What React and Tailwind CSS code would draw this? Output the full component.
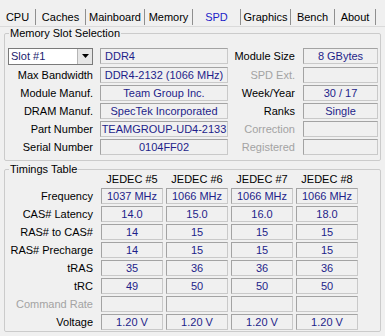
const tabs = [
  { name: "CPU", w: "w-[36px]" },
  { name: "Caches", w: "w-[50px]" },
  { name: "Mainboard", w: "w-[59px]" },
  { name: "Memory", w: "w-[48px]" },
  { name: "SPD", w: "w-[48px]", active: true },
  { name: "Graphics", w: "w-[50px]" },
  { name: "Bench", w: "w-[44px]" },
  { name: "About", w: "w-[41px]" },
];

const memRows = [
  { label: "Max Bandwidth", value: "DDR4-2132 (1066 MHz)", rLabel: "SPD Ext.", rValue: "", rOff: true },
  { label: "Module Manuf.", value: "Team Group Inc.", rLabel: "Week/Year", rValue: "30 / 17" },
  { label: "DRAM Manuf.", value: "SpecTek Incorporated", rLabel: "Ranks", rValue: "Single" },
  { label: "Part Number", value: "TEAMGROUP-UD4-2133", rLabel: "Correction", rValue: "", rOff: true },
  { label: "Serial Number", value: "0104FF02", rLabel: "Registered", rValue: "", rOff: true },
];

const timings = [
  { label: "Frequency", vals: ["1037 MHz", "1066 MHz", "1066 MHz", "1066 MHz"] },
  { label: "CAS# Latency", vals: ["14.0", "15.0", "16.0", "18.0"] },
  { label: "RAS# to CAS#", vals: ["14", "15", "15", "15"] },
  { label: "RAS# Precharge", vals: ["14", "15", "15", "15"] },
  { label: "tRAS", vals: ["35", "36", "36", "36"] },
  { label: "tRC", vals: ["49", "50", "50", "50"] },
  { label: "Command Rate", vals: ["", "", "", ""], off: true },
  { label: "Voltage", vals: ["1.20 V", "1.20 V", "1.20 V", "1.20 V"] },
];

const boxCls =
  "h-[16px] leading-[14px] border border-[#a3a3a3] border-r-[#c9c9c9] border-b-[#c9c9c9] text-[#1e1e8a] whitespace-nowrap overflow-hidden";

const Box = ({ value, className = "" }) => (
  <div className={`${boxCls} text-center ${className}`}>{value}</div>
);

const App = () => {
  return (
    <div className="w-[385px] h-[336px] bg-[#f0f0f0] text-[11px] leading-[13px] text-black overflow-hidden font-['Liberation_Sans',Arial,sans-serif]">
      <div className="flex h-[27px] pt-[9px] border-b border-[#dadada]">
        {tabs.map((t) => (
          <div
            key={t.name}
            className={`${t.w} h-[16px] leading-[16px] text-center border-r border-[#8f8f8f] ${
              t.active ? "text-[#1c1cc8]" : "text-black"
            }`}
          >
            {t.name}
          </div>
        ))}
      </div>

      <div className="px-[4px]">
        <fieldset className="w-[377px] border border-[#cbcbcb] rounded-[2px] pb-[5px]">
          <legend className="ml-[4px] px-[1px] leading-[13px]">Memory Slot Selection</legend>
          <div className="flex flex-col gap-[2px] pl-[3px] mt-[8px]">
            <div className="flex items-center h-[16px] mb-[1px]">
              <div className="w-[85px] h-[17px] flex bg-white border border-[#7a7a7a]">
                <span className="flex-1 pl-[2px] leading-[15px] text-[#1a1a6e]">Slot #1</span>
                <span className="w-[15px] h-[15px] bg-[#e6e6e6] border-l border-[#b5b5b5] flex items-center justify-center">
                  <svg width="7" height="4" viewBox="0 0 7 4">
                    <path d="M0 0h7L3.5 4z" fill="#000" />
                  </svg>
                </span>
              </div>
              <div className={`${boxCls} ml-[7px] w-[128px] text-left pl-[4px]`}>DDR4</div>
              <div className="w-[67px] text-right">Module Size</div>
              <Box value="8 GBytes" className="ml-[8px] w-[75px]" />
            </div>
            {memRows.map((r) => (
              <div key={r.label} className="flex items-center h-[16px]">
                <div className="w-[85px] text-right">{r.label}</div>
                <Box value={r.value} className="ml-[7px] w-[128px]" />
                <div className={`w-[67px] text-right ${r.rOff ? "text-[#a3a3a3]" : "text-black"}`}>
                  {r.rLabel}
                </div>
                <Box value={r.rValue} className="ml-[8px] w-[75px]" />
              </div>
            ))}
          </div>
        </fieldset>

        <fieldset className="mt-[2px] w-[377px] border border-[#cbcbcb] rounded-[2px] pb-[1px]">
          <legend className="ml-[4px] px-[1px] leading-[13px]">Timings Table</legend>
          <div className="flex flex-col gap-[2px] pl-[3px] -mt-[3px]">
            <div className="flex h-[13px]">
              <div className="w-[85px]" />
              <div className="ml-[8px] flex gap-[3px]">
                {["JEDEC #5", "JEDEC #6", "JEDEC #7", "JEDEC #8"].map((h) => (
                  <div key={h} className="w-[62px] text-center">
                    {h}
                  </div>
                ))}
              </div>
            </div>
            {timings.map((r) => (
              <div key={r.label} className="flex items-center h-[16px]">
                <div className={`w-[85px] text-right ${r.off ? "text-[#a3a3a3]" : "text-black"}`}>
                  {r.label}
                </div>
                <div className="ml-[8px] flex gap-[3px]">
                  {r.vals.map((v, i) => (
                    <Box key={i} value={v} className="w-[62px]" />
                  ))}
                </div>
              </div>
            ))}
          </div>
        </fieldset>
      </div>
    </div>
  );
};

export default App;
